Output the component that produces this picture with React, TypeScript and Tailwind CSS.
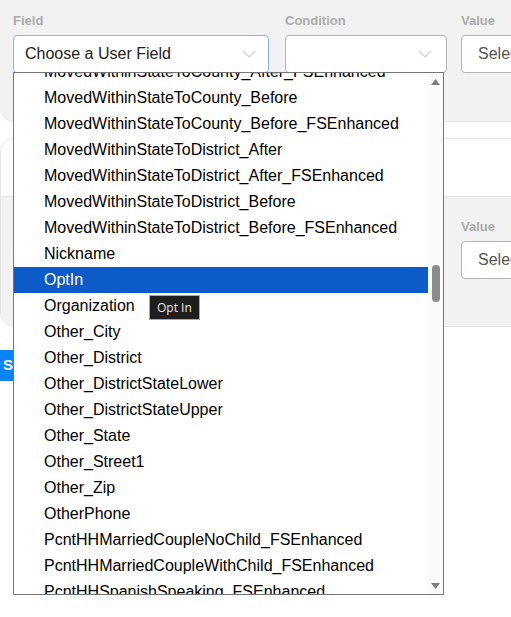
import React from "react";

const items = [
  "MovedWithinStateToCounty_After_FSEnhanced",
  "MovedWithinStateToCounty_Before",
  "MovedWithinStateToCounty_Before_FSEnhanced",
  "MovedWithinStateToDistrict_After",
  "MovedWithinStateToDistrict_After_FSEnhanced",
  "MovedWithinStateToDistrict_Before",
  "MovedWithinStateToDistrict_Before_FSEnhanced",
  "Nickname",
  "OptIn",
  "Organization",
  "Other_City",
  "Other_District",
  "Other_DistrictStateLower",
  "Other_DistrictStateUpper",
  "Other_State",
  "Other_Street1",
  "Other_Zip",
  "OtherPhone",
  "PcntHHMarriedCoupleNoChild_FSEnhanced",
  "PcntHHMarriedCoupleWithChild_FSEnhanced",
  "PcntHHSpanishSpeaking_FSEnhanced",
];

function Chevron() {
  return (
    <svg width="14" height="8" viewBox="0 0 14 8" className="shrink-0">
      <path d="M1 1 L7 7 L13 1" fill="none" stroke="#cdd3da" strokeWidth="1.4" />
    </svg>
  );
}

function Label({ children }: { children: React.ReactNode }) {
  return <div className="text-[13px] font-bold text-[#ababab] leading-[16px] mb-[6px]">{children}</div>;
}

export default function App() {
  return (
    <div
      className="relative w-[511px] h-[617px] overflow-hidden bg-white"
      style={{ fontFamily: '"Liberation Sans", Arial, sans-serif' }}
    >
      {/* card 1 */}
      <div className="w-[620px] h-[122px] bg-[#f2f2f2] rounded-bl-[14px] border-b border-[#e6e6e6] flex pt-[13px] pl-[13px]">
        <div className="w-[256px] mr-[16px]">
          <Label>Field</Label>
          <div className="h-[38px] border border-[#86b7ec] rounded-[4px] bg-white flex items-center justify-between pl-[11px] pr-[12px]">
            <span className="text-[16px] text-[#222]">Choose a User Field</span>
            <Chevron />
          </div>
        </div>
        <div className="w-[162px] mr-[14px]">
          <Label>Condition</Label>
          <div className="h-[38px] border border-[#b4b4b4] rounded-[4px] bg-white flex items-center justify-end pr-[14px]">
            <Chevron />
          </div>
        </div>
        <div className="w-[150px]">
          <Label>Value</Label>
          <div className="h-[38px] border border-[#b4b4b4] rounded-[4px] bg-white flex items-center pl-[16px]">
            <span className="text-[16px] text-[#555]">Select a value</span>
          </div>
        </div>
      </div>

      {/* card 2 */}
      <div className="mt-[16px] w-[620px] h-[189px] border border-[#e4e4e4] rounded-l-[14px] overflow-hidden flex flex-col">
        <div className="h-[58px] bg-white border-b border-[#e4e4e4]" />
        <div className="flex-1 bg-[#f2f2f2] pt-[22px] pl-[460px]">
          <Label>Value</Label>
          <div className="w-[150px] h-[38px] border border-[#b4b4b4] rounded-[4px] bg-white flex items-center pl-[16px]">
            <span className="text-[16px] text-[#555]">Select a value</span>
          </div>
        </div>
      </div>

      {/* save button */}
      <div className="mt-[23px] flex">
        <button className="h-[31px] bg-[#0a84f5] text-white font-bold text-[15px] pl-[3px] pr-[14px]">
          Save
        </button>
      </div>

      {/* dropdown list */}
      <div className="absolute left-[13px] top-[72px] w-[431px] h-[523px] border border-[#767676] bg-white overflow-hidden flex">
        <div className="flex-1 overflow-hidden">
          <div className="-mt-[14px]">
            {items.map((t) => (
              <div
                key={t}
                className={
                  t === "OptIn"
                    ? "h-[26px] leading-[26px] pl-[30px] text-[16px] bg-[#0c5bc9] text-white whitespace-nowrap"
                    : "h-[26px] leading-[26px] pl-[30px] text-[16px] text-black whitespace-nowrap"
                }
              >
                {t}
              </div>
            ))}
          </div>
        </div>
        <div className="w-[15px] bg-[#fafafa] relative flex flex-col items-center">
          <svg width="9" height="6" viewBox="0 0 9 6" className="mt-[6px]">
            <path d="M0 6 L4.5 0 L9 6 Z" fill="#7d7d7d" />
          </svg>
          <div className="mt-[180px] w-[8px] h-[37px] rounded-full bg-[#8b8b8b]" />
          <div className="flex-1" />
          <svg width="9" height="6" viewBox="0 0 9 6" className="mb-[5px]">
            <path d="M0 0 L4.5 6 L9 0 Z" fill="#7d7d7d" />
          </svg>
        </div>
      </div>

      {/* tooltip */}
      <div
        className="absolute left-[149px] top-[295px] h-[25px] px-[7px] bg-[#1e1e1e] border border-[#a8a8a8] text-[#e8e8e8] text-[12px] leading-[23px]"
        style={{ fontFamily: '"Open Sans", "Noto Sans", sans-serif' }}
      >
        Opt In
      </div>
    </div>
  );
}
